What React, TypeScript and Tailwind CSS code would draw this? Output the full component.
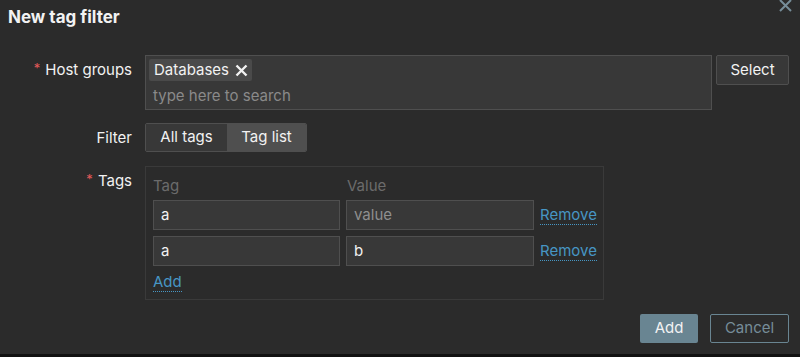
import React from 'react';

const Req = () => <span className="text-[#e45959] text-[13px] mr-[5px] relative top-[-2px]">*</span>;

const Label: React.FC<{ text: string; required?: boolean }> = ({ text, required }) => (
  <div className="w-[132px] shrink-0 text-right leading-[30px] text-[#f2f2f2]">
    {required && <Req />}
    {text}
  </div>
);

const TagInput: React.FC<{ value: string; placeholder?: boolean; w: string }> = ({ value, placeholder, w }) => (
  <div
    className={`${w} shrink-0 h-[30px] bg-[#383838] border border-[#4f4f4f] px-[7px] flex items-center ${
      placeholder ? 'text-[#8f8f8f]' : 'text-[#f2f2f2]'
    }`}
  >
    {value}
  </div>
);

const Link: React.FC<{ text: string }> = ({ text }) => (
  <span className="text-[#4796c4] border-b border-dotted border-[#4796c4] leading-[17px]">{text}</span>
);

export default function App() {
  const rows = [
    { tag: 'a', value: 'value', placeholder: true },
    { tag: 'a', value: 'b', placeholder: false },
  ];

  return (
    <div className="w-[800px] h-[357px] bg-[#111111] overflow-hidden font-['Inter',sans-serif] text-[15px]">
      <div className="relative h-[354px] bg-[#2b2b2b] flex flex-col">
        {/* header */}
        <div className="px-[8px] pt-[5px] h-[55px]">
          <h2 className="text-[17px] font-bold text-[#f2f2f2] leading-[24px]">New tag filter</h2>
        </div>
        <button className="absolute right-[8px] top-0 text-[#768d99]">
          <svg width="13" height="12" viewBox="0 0 13 12">
            <path d="M1 0 L12 11 M12 0 L1 11" stroke="currentColor" strokeWidth="2" />
          </svg>
        </button>

        {/* form */}
        <div className="flex flex-col gap-[13px]">
          <div className="flex gap-[13px]">
            <Label text="Host groups" required />
            <div className="w-[567px] h-[55px] bg-[#383838] border border-[#4f4f4f] px-[3px] pt-[3px]">
              <div className="inline-flex items-center h-[22px] bg-[#4a4a4a] rounded-[2px] pl-[5px] pr-[4px] gap-[6px] text-[#f2f2f2]">
                Databases
                <svg width="13" height="13" viewBox="0 0 13 13">
                  <path d="M1.5 1.5 L11.5 11.5 M11.5 1.5 L1.5 11.5" stroke="#f2f2f2" strokeWidth="2.4" />
                </svg>
              </div>
              <div className="text-[#8a8a8a] pl-[4px] mt-[4px] leading-[20px]">type here to search</div>
            </div>
            <button className="ml-[-9px] w-[73px] h-[30px] bg-[#383838] border border-[#4f4f4f] rounded-[2px] text-[#f2f2f2]">
              Select
            </button>
          </div>

          <div className="flex gap-[13px]">
            <Label text="Filter" />
            <div className="flex h-[29px] border border-[#4f4f4f] rounded-[2px] overflow-hidden text-[#f2f2f2]">
              <div className="w-[81px] bg-[#383838] flex items-center justify-center">All tags</div>
              <div className="w-[79px] bg-[#4f4f4f] flex items-center justify-center">Tag list</div>
            </div>
          </div>

          <div className="flex gap-[13px]">
            <Label text="Tags" required />
            <div className="w-[459px] h-[134px] border border-[#3a3a3a] px-[7px] pt-[4px]">
              <div className="flex gap-[6px] h-[30px] items-center text-[#6b6b6b]">
                <div className="w-[187px]">Tag</div>
                <div className="w-[188px] pl-[1px]">Value</div>
              </div>
              <div className="flex flex-col gap-[6px] mt-[-1px]">
                {rows.map((r, i) => (
                  <div key={i} className="flex gap-[6px] items-center">
                    <TagInput w="w-[187px]" value={r.tag} />
                    <TagInput w="w-[188px]" value={r.value} placeholder={r.placeholder} />
                    <span className="shrink-0">
                      <Link text="Remove" />
                    </span>
                  </div>
                ))}
              </div>
              <div className="mt-[5px]">
                <Link text="Add" />
              </div>
            </div>
          </div>
        </div>

        {/* footer */}
        <div className="flex justify-end gap-[12px] pr-[11px] mt-[14px]">
          <button className="w-[58px] h-[29px] bg-[#698592] rounded-[2px] text-[#f2f2f2]">Add</button>
          <button className="w-[79px] h-[29px] border border-[#698592] rounded-[2px] text-[#768d99]">Cancel</button>
        </div>
      </div>
    </div>
  );
}
